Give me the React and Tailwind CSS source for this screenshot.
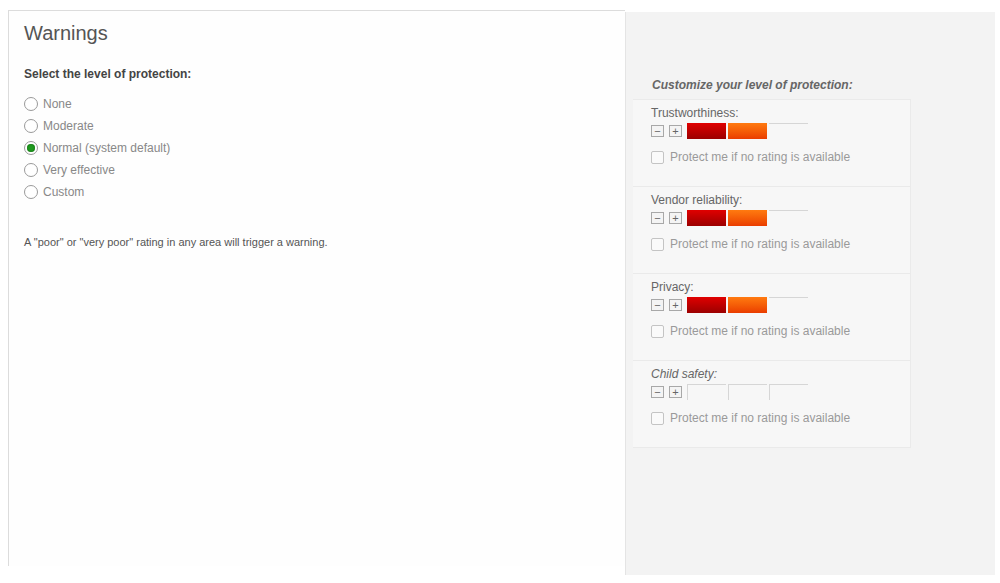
const options = ["None", "Moderate", "Normal (system default)", "Very effective", "Custom"];

const categories = [
  { name: "Trustworthiness:", level: 2, italic: false },
  { name: "Vendor reliability:", level: 2, italic: false },
  { name: "Privacy:", level: 2, italic: false },
  { name: "Child safety:", level: 0, italic: true },
];

function Radio({ checked }) {
  return (
    <span className="flex h-[14px] w-[14px] items-center justify-center rounded-full border border-[#9a9a9a] bg-white">
      {checked && <span className="h-[8px] w-[8px] rounded-full bg-[#1f9a1f] shadow-[inset_0_0_2px_#0b5d0b]" />}
    </span>
  );
}

function StepButton({ children }) {
  return (
    <span className="flex h-[12px] w-[13px] items-center justify-center border border-[#a8a8a8] bg-[#f4f4f4] text-[11px] leading-none text-[#666]">
      {children}
    </span>
  );
}

function Meter({ level }) {
  return (
    <div className="flex h-[16px] items-stretch">
      {[0, 1, 2].map((i) => {
        if (i < level) {
          const cls =
            i === 0
              ? "bg-linear-to-b from-[#e00000] to-[#9c0000]"
              : "bg-linear-to-b from-[#ff7a10] to-[#ea3c00]";
          return <span key={i} className={`w-[39px] mr-[2px] ${cls}`} />;
        }
        return (
          <span
            key={i}
            className={`w-[39px] mr-[2px] border-t border-[#d6d6d6] ${level === 0 ? "border-l" : ""}`}
          />
        );
      })}
    </div>
  );
}

function Category({ name, level, italic }) {
  return (
    <div className="h-[87px] border-b border-[#eaeaea] bg-[#f7f7f7] pl-[18px] pt-[4px]">
      <div className={`text-[12px] text-[#666] ${italic ? "italic" : ""}`}>{name}</div>
      <div className="mt-[1px] flex items-center gap-[5px]">
        <StepButton>−</StepButton>
        <StepButton>+</StepButton>
        <Meter level={level} />
      </div>
      <label className="mt-[9px] flex items-center gap-[6px] text-[12px] text-[#9a9a9a]">
        <span className="h-[13px] w-[13px] rounded-[2px] border border-[#c4c4c4] bg-[#fafafa]" />
        Protect me if no rating is available
      </label>
    </div>
  );
}

export default function App() {
  return (
    <div
      className="flex h-[583px] w-[1000px] bg-white pl-[8px] pt-[10px]"
      style={{ fontFamily: '"Liberation Sans", Arial, sans-serif' }}
    >
      <div className="h-[556px] w-[617px] border-l border-t border-[#dcdcdc] bg-[#fefefe] pl-[15px] pt-[7px]">
        <h1 className="text-[20px] text-[#555]">Warnings</h1>
        <p className="mt-[17px] text-[12px] font-bold text-[#444]">Select the level of protection:</p>
        <div className="mt-[14px] flex flex-col gap-[8px]">
          {options.map((o, i) => (
            <div key={o} className="flex items-center gap-[5px] text-[12px] leading-[14px] text-[#888]">
              <Radio checked={i === 2} />
              {o}
            </div>
          ))}
        </div>
        <p className="mt-[35px] text-[11px] text-[#555]">
          A "poor" or "very poor" rating in any area will trigger a warning.
        </p>
      </div>
      <div className="mt-[2px] h-[563px] w-[370px] border-l border-[#e4e4e4] bg-[#f3f3f3] pt-[64px]">
        <p className="pl-[26px] text-[12px] font-bold italic text-[#666]">Customize your level of protection:</p>
        <div className="mt-[5px] ml-[7px] w-[278px] border-r border-t border-[#eaeaea]">
          {categories.map((c) => (
            <Category key={c.name} {...c} />
          ))}
        </div>
      </div>
    </div>
  );
}
